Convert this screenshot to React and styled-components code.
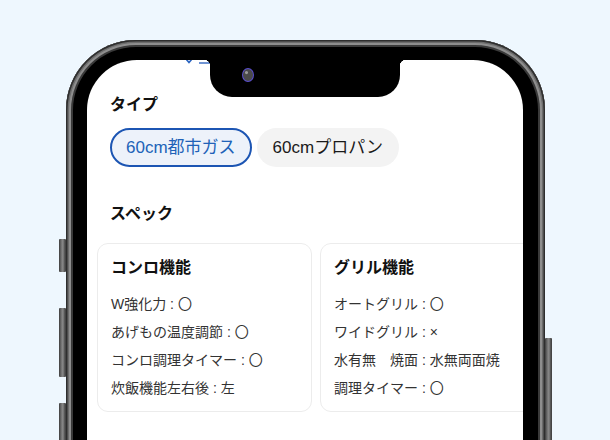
import React from 'react';
import styled, { createGlobalStyle } from 'styled-components';

const GlobalStyle = createGlobalStyle`
  html, body {
    margin: 0;
    padding: 0;
  }
  body {
    font-family: "Liberation Sans", "Noto Sans CJK JP", sans-serif;
    background: #eef7fe;
  }
`;

const Page = styled.div`
  width: 610px;
  height: 440px;
  overflow: hidden;
  background: #eef7fe;
  display: flex;
  padding: 40px 0 0 66px;
  box-sizing: border-box;
`;

const Phone = styled.div`
  position: relative;
  flex: none;
  width: 479px;
  height: 520px;
  box-sizing: border-box;
  padding: 20px 22px 0 21px;
  border-radius: 70px;
  background: #000;
  box-shadow:
    inset 0 0 0 1.5px #2e2e2e,
    inset 0 0 0 3px #6c6c6c,
    inset 0 0 0 5px #8e8e8e,
    inset 0 0 0 7px #3a3a3a;
`;

const SideButton = styled.div`
  position: absolute;
  width: 7px;
  top: ${p => p.$top}px;
  height: ${p => p.$h}px;
  ${p => (p.$right ? 'right: -7px;' : 'left: -7px;')}
  border-radius: 1px;
  background: linear-gradient(90deg, #3c3c3c 0%, #6e6e6e 30%, #8a8a8a 55%, #555 80%, #3c3c3c 100%);
`;

const Screen = styled.div`
  position: relative;
  height: 100%;
  background: #fff;
  border-radius: 50px 50px 0 0;
  overflow: hidden;
`;

const Notch = styled.div`
  position: absolute;
  top: 0;
  left: 123px;
  width: 190px;
  height: 37px;
  background: #000;
  border-radius: 0 0 22px 22px;

  &::before,
  &::after {
    content: '';
    position: absolute;
    top: 0;
    width: 6px;
    height: 6px;
  }
  &::before {
    left: -6px;
    background: radial-gradient(circle at 0 100%, transparent 6px, #000 6.5px);
  }
  &::after {
    right: -6px;
    background: radial-gradient(circle at 100% 100%, transparent 6px, #000 6.5px);
  }
`;

const Camera = styled.div`
  position: absolute;
  top: 8px;
  left: 32px;
  width: 10px;
  height: 12px;
  border-radius: 50%;
  background: radial-gradient(circle at 35% 30%, #9a9a9a 0 1px, #4a4a4a 2px);
  border: 1.5px solid #5b4fcf;
`;

const TopLink = styled.div`
  display: flex;
  align-items: flex-end;
  gap: 6px;
  height: 18px;
  margin: -14px 0 0 98px;
  color: #2a64c0;
`;

const LinkBar = styled.span`
  display: block;
  width: 13px;
  height: 2px;
  background: #6f93d3;
`;

const Content = styled.div`
  padding: 29px 0 0;
`;

const Section = styled.div`
  padding: 0 23px;
`;

const Heading = styled.h2`
  margin: 0;
  font-size: 16px;
  line-height: 24px;
  font-weight: 700;
  color: #111;
`;

const ChipRow = styled.div`
  display: flex;
  gap: 5px;
  margin-top: 11px;
`;

const Chip = styled.span`
  display: inline-flex;
  align-items: center;
  box-sizing: border-box;
  font-size: 17px;
  line-height: 22px;
  height: 39px;
  padding: 0 14px;
  border-radius: 20px;
  border: 2px solid ${p => (p.$active ? '#1c55b3' : 'transparent')};
  background: ${p => (p.$active ? '#edf2fa' : '#f3f3f3')};
  color: ${p => (p.$active ? '#2162b8' : '#1a1a1a')};
  cursor: pointer;
  white-space: nowrap;
`;

const SpecSection = styled(Section)`
  margin-top: 35px;
`;

const CardRow = styled.div`
  display: flex;
  gap: 8px;
  margin-top: 17px;
  padding: 0 10px;
  overflow: hidden;
`;

const Card = styled.div`
  flex: none;
  width: 215px;
  box-sizing: border-box;
  padding: 12px 13px 9px;
  border: 1.5px solid #ececec;
  border-radius: 11px;
  background: #fff;
`;

const CardTitle = styled.h3`
  margin: 0 0 10px;
  font-size: 16px;
  line-height: 24px;
  font-weight: 700;
  color: #111;
`;

const SpecList = styled.ul`
  list-style: none;
  margin: 0;
  padding: 0;
`;

const SpecItem = styled.li`
  font-size: 14px;
  line-height: 28px;
  color: #333;
  white-space: nowrap;
`;

const specs = [
  {
    title: 'コンロ機能',
    items: ['W強化力 : 〇', 'あげもの温度調節 : 〇', 'コンロ調理タイマー : 〇', '炊飯機能左右後 : 左'],
  },
  {
    title: 'グリル機能',
    items: ['オートグリル : 〇', 'ワイドグリル : ×', '水有無　焼面 : 水無両面焼', '調理タイマー : 〇'],
  },
];

const App = () => {
  return (
    <>
      <GlobalStyle />
      <Page>
        <Phone>
          <SideButton $top={199} $h={33} />
          <SideButton $top={268} $h={69} />
          <SideButton $top={363} $h={90} />
          <SideButton $right $top={298} $h={150} />
          <Screen>
            <TopLink>
              <svg width="8" height="6" viewBox="0 0 8 6" fill="none">
                <path d="M1 1l3 3.5L7 1" stroke="#2a64c0" strokeWidth="1.6" />
              </svg>
              <LinkBar />
            </TopLink>
            <Content>
              <Section>
                <Heading>タイプ</Heading>
                <ChipRow>
                  <Chip $active>60cm都市ガス</Chip>
                  <Chip>60cmプロパン</Chip>
                </ChipRow>
              </Section>
              <SpecSection>
                <Heading>スペック</Heading>
              </SpecSection>
              <CardRow>
                {specs.map(card => (
                  <Card key={card.title}>
                    <CardTitle>{card.title}</CardTitle>
                    <SpecList>
                      {card.items.map(item => (
                        <SpecItem key={item}>{item}</SpecItem>
                      ))}
                    </SpecList>
                  </Card>
                ))}
              </CardRow>
            </Content>
            <Notch>
              <Camera />
            </Notch>
          </Screen>
        </Phone>
      </Page>
    </>
  );
};

export default App;
